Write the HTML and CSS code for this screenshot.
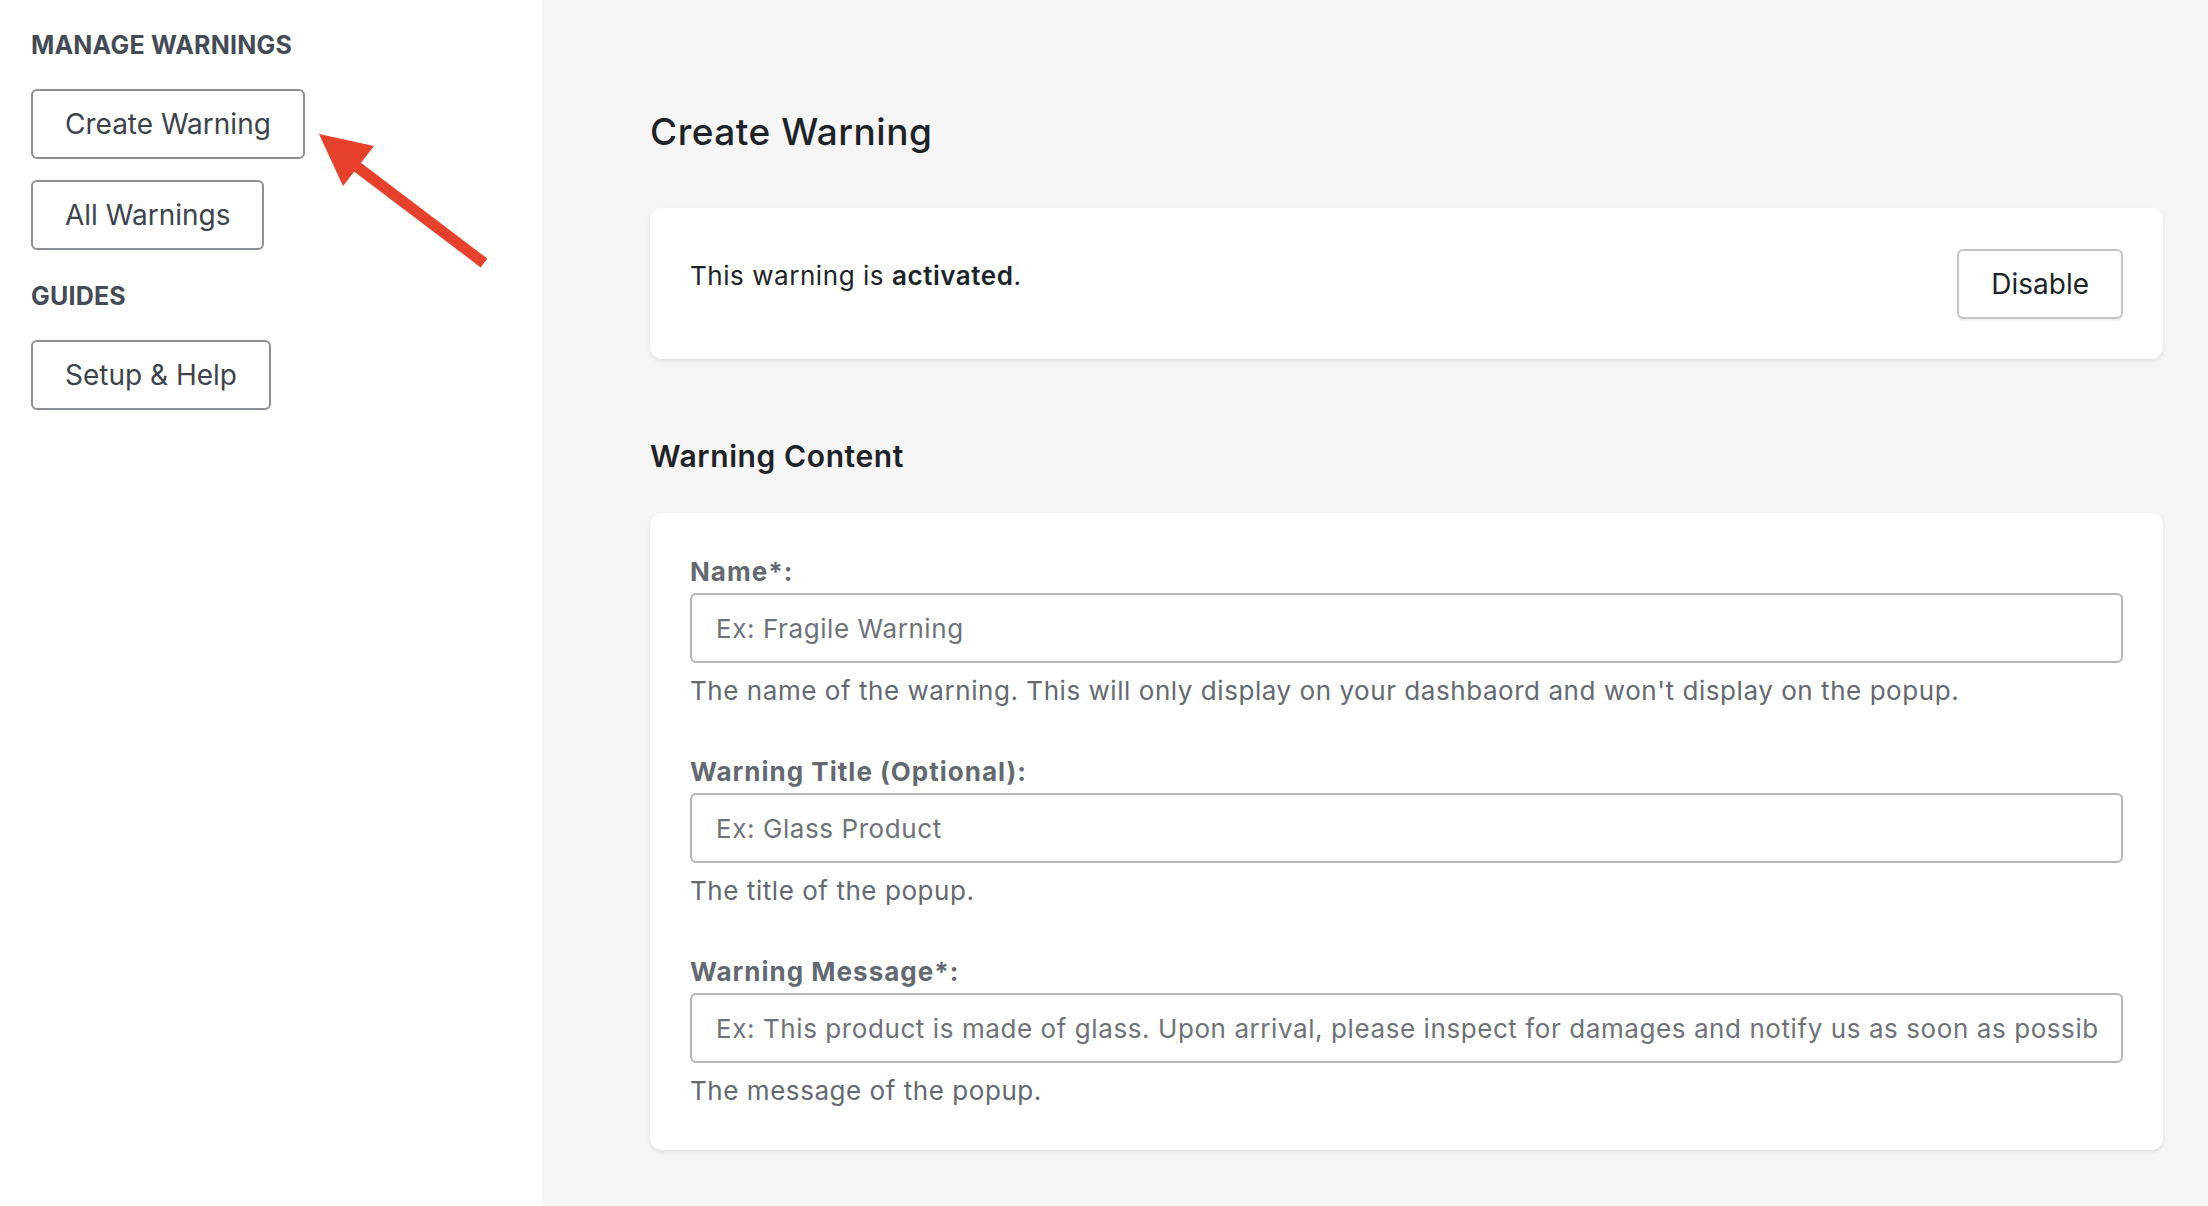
FILE: index.html
```html
<!DOCTYPE html>
<html lang="en">
<head>
<meta charset="utf-8">
<title>Create Warning</title>
<link rel="stylesheet" href="styles.css">
</head>
<body>
<div class="layout">
  <aside class="sidebar">
    <h3 class="side-title">Manage Warnings</h3>
    <a class="nav-btn first">Create Warning</a>
    <a class="nav-btn">All Warnings</a>
    <h3 class="side-title guides">Guides</h3>
    <a class="nav-btn first">Setup &amp; Help</a>
    <svg class="arrow" width="200" height="160" viewBox="300 120 200 160">
      <line x1="484" y1="263" x2="352" y2="163" stroke="#e8412b" stroke-width="11" />
      <polygon points="319,134 374,146 343,186" fill="#e8412b" />
    </svg>
  </aside>
  <main class="main">
    <h1 class="page-title">Create Warning</h1>
    <section class="card status">
      <p class="status-text">This warning is <strong>activated</strong>.</p>
      <button class="btn">Disable</button>
    </section>
    <h2 class="section-title">Warning Content</h2>
    <section class="card form">
      <div class="field">
        <label class="label">Name*:</label>
        <input class="input" type="text" placeholder="Ex: Fragile Warning">
        <p class="desc">The name of the warning. This will only display on your dashbaord and won't display on the popup.</p>
      </div>
      <div class="field">
        <label class="label">Warning Title (Optional):</label>
        <input class="input" type="text" placeholder="Ex: Glass Product">
        <p class="desc">The title of the popup.</p>
      </div>
      <div class="field">
        <label class="label">Warning Message*:</label>
        <input class="input" type="text" placeholder="Ex: This product is made of glass. Upon arrival, please inspect for damages and notify us as soon as possible.">
        <p class="desc">The message of the popup.</p>
      </div>
    </section>
  </main>
</div>
</body>
</html>
```

FILE: styles.css
```css
* { box-sizing: border-box; }
html, body { margin: 0; padding: 0; }
body {
  font-family: Inter, "Noto Sans", sans-serif;
  background: #f5f5f5;
  color: #1d2327;
}
.layout {
  display: flex;
  min-height: 100vh;
}
.sidebar {
  position: relative;
  width: 542px;
  flex: none;
  background: #ffffff;
  padding: 27px 31px;
  display: flex;
  flex-direction: column;
  align-items: flex-start;
}
.side-title {
  margin: 0;
  font-size: 25px;
  line-height: 36px;
  font-weight: 700;
  text-transform: uppercase;
  color: #454b54;
  letter-spacing: 0.2px;
}
.side-title.guides { margin-top: 28px; }
.nav-btn {
  display: flex;
  align-items: center;
  height: 70px;
  padding: 0 32px;
  border: 2px solid #8c8f94;
  border-radius: 6px;
  font-size: 28px;
  color: #3c434a;
  margin-top: 21px;
  cursor: pointer;
}
.nav-btn.first { margin-top: 26px; }
.arrow {
  position: absolute;
  left: 300px;
  top: 120px;
}
.main {
  flex: 1;
  padding: 107px 45px 40px 108px;
}
.page-title {
  margin: 0;
  font-size: 37px;
  line-height: 50px;
  font-weight: 500;
  letter-spacing: 0.5px;
  color: #1d2327;
}
.card {
  background: #ffffff;
  border-radius: 12px;
  box-shadow: 0 2px 4px rgba(0, 0, 0, 0.09);
}
.status {
  margin-top: 51px;
  height: 151px;
  padding: 41px 40px;
  display: flex;
  justify-content: space-between;
  align-items: flex-start;
}
.status-text {
  margin: 9px 0 0;
  font-size: 26px;
  line-height: 36px;
  letter-spacing: 0.55px;
  color: #1d2327;
}
.status-text strong { font-weight: 600; }
.btn {
  height: 70px;
  padding: 0 32px;
  background: #ffffff;
  border: 2px solid #c3c4c7;
  border-radius: 6px;
  font-family: inherit;
  font-size: 28px;
  color: #1d2327;
  box-shadow: 0 2px 2px rgba(0, 0, 0, 0.06);
}
.section-title {
  margin: 77px 0 0;
  font-size: 30px;
  line-height: 40px;
  font-weight: 600;
  letter-spacing: 0.6px;
  color: #1d2327;
}
.form {
  margin-top: 37px;
  padding: 41px 40px 41px;
}
.field + .field { margin-top: 45px; }
.label {
  display: block;
  font-size: 26px;
  line-height: 36px;
  font-weight: 700;
  letter-spacing: 1px;
  color: #646970;
}
.input {
  display: block;
  width: 100%;
  height: 70px;
  margin-top: 3px;
  padding: 0 24px;
  border: 2px solid #b4b6ba;
  border-radius: 6px;
  font-family: inherit;
  font-size: 26px;
  letter-spacing: 0.58px;
  color: #1d2327;
  background: #fff;
}
.input::placeholder { color: #6e7278; opacity: 1; }
.desc {
  margin: 10px 0 0;
  font-size: 26px;
  line-height: 36px;
  letter-spacing: 0.55px;
  color: #646970;
}
```
